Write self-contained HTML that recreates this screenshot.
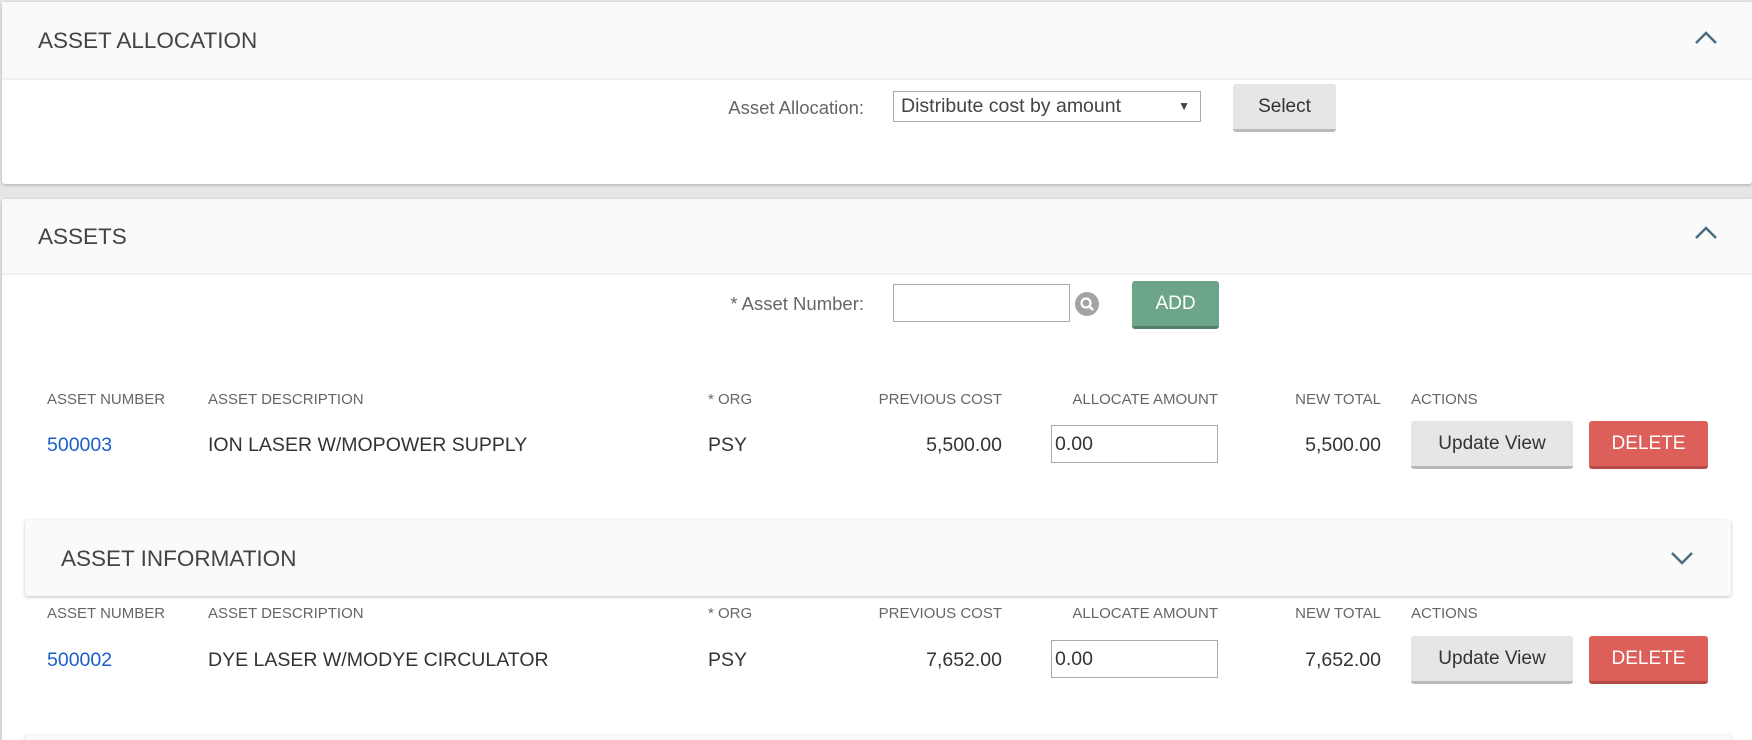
<!DOCTYPE html>
<html><head><style>
*{box-sizing:border-box;margin:0;padding:0}
html{width:1752px;height:740px;overflow:hidden}
body{width:1752px;height:740px;background:#e6e6e6;font-family:"Liberation Sans",sans-serif;position:relative;overflow:hidden;color:#333}
.abs{position:absolute}
.panel{position:absolute;background:#fff;border-radius:3px;box-shadow:0 1px 3px rgba(0,0,0,.25)}
.hdr{position:absolute;left:0;right:0;top:0;background:#fafafa;border-bottom:2px solid #f0f0f0}
.ht{position:absolute;font-size:22.5px;color:#444;}
.lbl{position:absolute;font-size:18.5px;color:#666;text-align:right}
.th{position:absolute;font-size:15px;color:#666}
.td{position:absolute;font-size:19.5px;color:#333}
.btn{position:absolute;border-radius:3px;font-size:19px;text-align:center}
.gray{background:#e6e6e6;border-bottom:3px solid #b9b9b9;color:#333}
.red{background:#dd5f5a;border-bottom:3px solid #b44a46;color:#fff}
.inp{position:absolute;border:1px solid #aaa;background:#fff;font-size:19.5px;padding-left:3px}
.r{text-align:right}
</style></head><body>
<div class="panel" style="left:2px;top:2px;width:1750px;height:182px">
 <div class="hdr" style="height:78px"></div>
 <div class="ht" style="left:36px;top:26px">ASSET ALLOCATION</div>
 <svg class="abs" style="left:1692px;top:28px" width="24" height="16"><path d="M2 13 L12 3 L22 13" fill="none" stroke="#4c6c80" stroke-width="2.5"/></svg>
 <div class="lbl" style="left:600px;width:262px;top:95px">Asset Allocation:</div>
 <div class="inp" style="left:891px;top:89px;width:308px;height:31px;color:#444;padding-left:7px;line-height:29px">Distribute cost by amount<span style="position:absolute;right:10px;font-size:12px;color:#444">&#9660;</span></div>
 <div class="btn gray" style="left:1231px;top:82px;width:103px;height:48px;line-height:46px">Select</div>
</div>
<div class="panel" style="left:2px;top:199px;width:1750px;height:545px">
 <div class="hdr" style="height:76px"></div>
 <div class="ht" style="left:36px;top:25px">ASSETS</div>
 <svg class="abs" style="left:1692px;top:26px" width="24" height="16"><path d="M2 13 L12 3 L22 13" fill="none" stroke="#4c6c80" stroke-width="2.5"/></svg>
 <div class="lbl" style="left:600px;width:262px;top:94px">* Asset Number:</div>
 <div class="inp" style="left:891px;top:85px;width:177px;height:38px"></div>
 <svg class="abs" style="left:1072px;top:92px" width="26" height="26"><circle cx="13" cy="13" r="12" fill="#a3a3a3"/><circle cx="12" cy="12" r="4.5" fill="none" stroke="#fff" stroke-width="2.2"/><path d="M15 15 L19 19" stroke="#fff" stroke-width="2.5"/></svg>
 <div class="btn" style="left:1130px;top:82px;width:87px;height:48px;line-height:46px;background:#6ca588;border-bottom:3px solid #52806a;color:#fff">ADD</div>
</div>
<div class="th" style="left:47px;top:391px">ASSET NUMBER</div>
<div class="th" style="left:208px;top:391px">ASSET DESCRIPTION</div>
<div class="th" style="left:708px;top:391px">* ORG</div>
<div class="th r" style="left:800px;width:202px;top:391px">PREVIOUS COST</div>
<div class="th r" style="left:1000px;width:218px;top:391px">ALLOCATE AMOUNT</div>
<div class="th r" style="left:1200px;width:181px;top:391px">NEW TOTAL</div>
<div class="th" style="left:1411px;top:391px">ACTIONS</div>
<div class="td" style="left:47px;top:434px;color:#1a5fc8">500003</div>
<div class="td" style="left:208px;top:434px">ION LASER W/MOPOWER SUPPLY</div>
<div class="td" style="left:708px;top:434px">PSY</div>
<div class="td r" style="left:800px;width:202px;top:434px">5,500.00</div>
<div class="inp" style="left:1051px;top:425px;width:167px;height:38px;line-height:37px">0.00</div>
<div class="td r" style="left:1200px;width:181px;top:434px">5,500.00</div>
<div class="btn gray" style="left:1411px;top:421px;width:162px;height:48px;line-height:46px">Update View</div>
<div class="btn red" style="left:1589px;top:421px;width:119px;height:48px;line-height:46px">DELETE</div>

<div class="panel" style="left:25px;top:520px;width:1706px;height:76px;background:#fafafa"></div>
<div class="ht" style="left:61px;top:546px">ASSET INFORMATION</div>
<svg class="abs" style="left:1670px;top:550px" width="24" height="16"><path d="M2 3 L12 13 L22 3" fill="none" stroke="#4c6c80" stroke-width="2.5"/></svg>

<div class="th" style="left:47px;top:605px">ASSET NUMBER</div>
<div class="th" style="left:208px;top:605px">ASSET DESCRIPTION</div>
<div class="th" style="left:708px;top:605px">* ORG</div>
<div class="th r" style="left:800px;width:202px;top:605px">PREVIOUS COST</div>
<div class="th r" style="left:1000px;width:218px;top:605px">ALLOCATE AMOUNT</div>
<div class="th r" style="left:1200px;width:181px;top:605px">NEW TOTAL</div>
<div class="th" style="left:1411px;top:605px">ACTIONS</div>
<div class="td" style="left:47px;top:649px;color:#1a5fc8">500002</div>
<div class="td" style="left:208px;top:649px">DYE LASER W/MODYE CIRCULATOR</div>
<div class="td" style="left:708px;top:649px">PSY</div>
<div class="td r" style="left:800px;width:202px;top:649px">7,652.00</div>
<div class="inp" style="left:1051px;top:640px;width:167px;height:38px;line-height:37px">0.00</div>
<div class="td r" style="left:1200px;width:181px;top:649px">7,652.00</div>
<div class="btn gray" style="left:1411px;top:636px;width:162px;height:48px;line-height:46px">Update View</div>
<div class="btn red" style="left:1589px;top:636px;width:119px;height:48px;line-height:46px">DELETE</div>

<div class="panel" style="left:25px;top:735px;width:1706px;height:20px;background:#fafafa"></div>
</body></html>
